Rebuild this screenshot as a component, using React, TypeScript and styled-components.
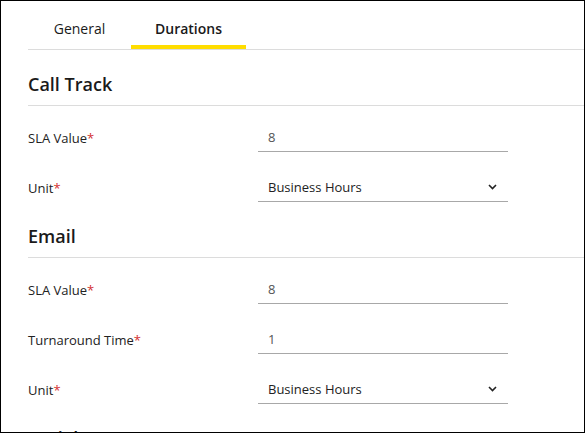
import styled, { createGlobalStyle } from 'styled-components'

const GlobalStyle = createGlobalStyle`
  html, body {
    margin: 0;
    padding: 0;
    background: #fff;
  }
  body {
    font-family: 'Open Sans', 'Liberation Sans', sans-serif;
    color: #222;
  }
  * { box-sizing: border-box; }
`

const Frame = styled.div`
  width: 585px;
  height: 433px;
  border: 1px solid #000;
  overflow: hidden;
  padding-left: 27px;
  background: #fff;
`

const TabBar = styled.div`
  display: flex;
  border-bottom: 1px solid #dcdcdc;
`

const Tab = styled.div<{ $active?: boolean }>`
  padding: 18px 0 6px;
  width: ${p => (p.$active ? '115px' : '103px')};
  text-align: center;
  font-size: 14px;
  line-height: 20px;
  font-weight: ${p => (p.$active ? 600 : 400)};
  color: #1a1a1a;
  border-bottom: 4px solid ${p => (p.$active ? '#ffdd00' : 'transparent')};
`

const SectionTitle = styled.h2`
  margin: 0;
  padding: 22px 0 9px;
  font-size: 18px;
  line-height: 24px;
  font-weight: 600;
  color: #1a1a1a;
  border-bottom: 1px solid #dcdcdc;
`

const Rows = styled.div`
  display: flex;
  flex-direction: column;
  gap: 21px;
  padding-top: 17px;
`

const Row = styled.div`
  display: flex;
  align-items: center;
  height: 29px;
`

const Label = styled.div`
  width: 230px;
  font-size: 13px;
  color: #222;
`

const Required = styled.span`
  color: #d32f2f;
`

const Field = styled.div<{ $muted?: boolean }>`
  width: 250px;
  height: 29px;
  display: flex;
  align-items: center;
  justify-content: space-between;
  padding: 0 11px 0 10px;
  font-size: 13px;
  color: ${p => (p.$muted ? '#555' : '#222')};
  border-bottom: 1px solid #a8a8a8;
`

function Chevron() {
  return (
    <svg width="9" height="6" viewBox="0 0 9 6">
      <path d="M1 1l3.5 3.5L8 1" fill="none" stroke="#222" strokeWidth="1.6" />
    </svg>
  )
}

type FieldRow = { label: string; value: string; select?: boolean }

const SECTIONS: { title: string; rows: FieldRow[] }[] = [
  {
    title: 'Call Track',
    rows: [
      { label: 'SLA Value', value: '8' },
      { label: 'Unit', value: 'Business Hours', select: true },
    ],
  },
  {
    title: 'Email',
    rows: [
      { label: 'SLA Value', value: '8' },
      { label: 'Turnaround Time', value: '1' },
      { label: 'Unit', value: 'Business Hours', select: true },
    ],
  },
  { title: 'Social', rows: [] },
]

export default function App() {
  return (
    <>
      <GlobalStyle />
      <Frame>
        <TabBar>
          <Tab>General</Tab>
          <Tab $active>Durations</Tab>
        </TabBar>
        {SECTIONS.map(section => (
          <section key={section.title}>
            <SectionTitle>{section.title}</SectionTitle>
            {section.rows.length > 0 && (
              <Rows>
                {section.rows.map(row => (
                  <Row key={row.label}>
                    <Label>
                      {row.label}
                      <Required>*</Required>
                    </Label>
                    <Field $muted={!row.select}>
                      <span>{row.value}</span>
                      {row.select && <Chevron />}
                    </Field>
                  </Row>
                ))}
              </Rows>
            )}
          </section>
        ))}
      </Frame>
    </>
  )
}
